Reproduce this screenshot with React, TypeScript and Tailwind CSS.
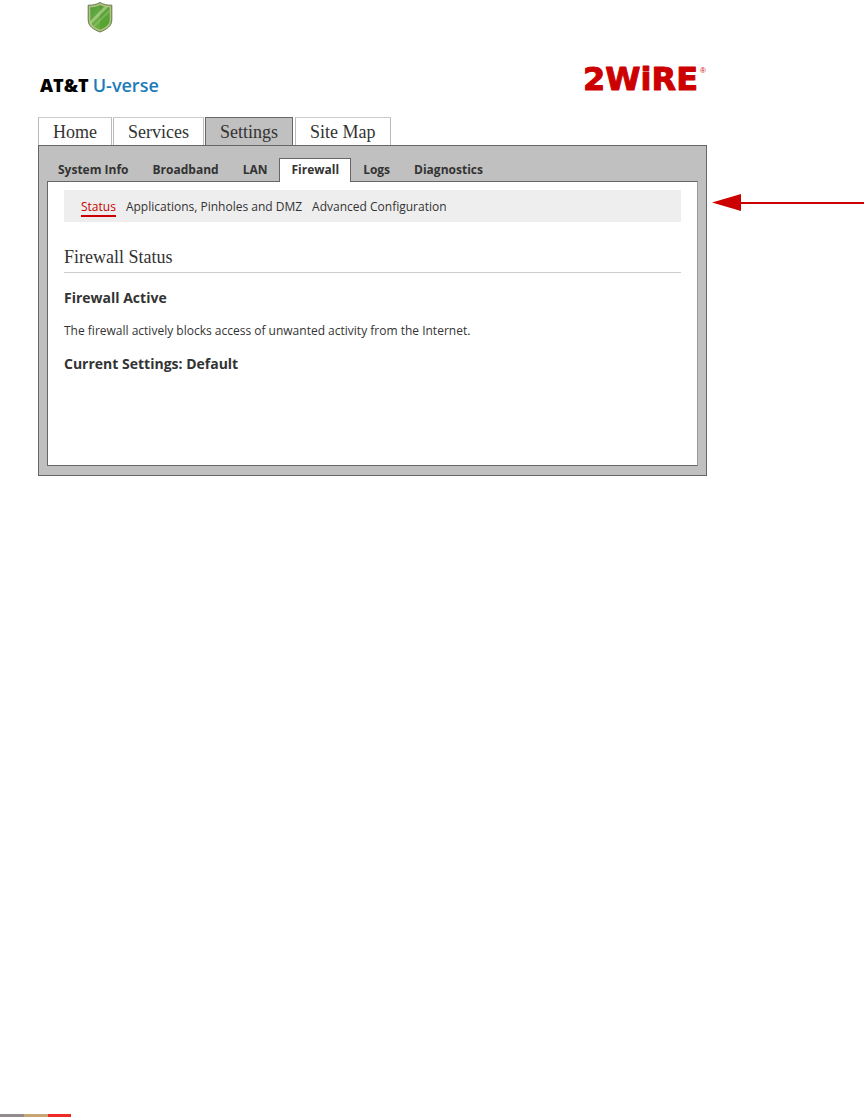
const MAIN_TABS = ["Home", "Services", "Settings", "Site Map"];
const SUB_TABS = ["System Info", "Broadband", "LAN", "Firewall", "Logs", "Diagnostics"];
const PAGES = ["Status", "Applications, Pinholes and DMZ", "Advanced Configuration"];

function ShieldIcon() {
  return (
    <svg width="26" height="32" viewBox="0 0 26 32" aria-hidden="true">
      <defs>
        <linearGradient id="shield" x1="0" y1="0" x2="1" y2="1">
          <stop offset="0" stopColor="#4f9e3c" />
          <stop offset="0.5" stopColor="#6cae45" />
          <stop offset="1" stopColor="#5cb02c" />
        </linearGradient>
      </defs>
      <path
        d="M13 1.5C9.5 3.6 5.5 4.4 1.2 4.2V19c0 6 5.3 9.5 11.8 12C19.5 28.5 24.8 25 24.8 19V4.2C20.5 4.4 16.5 3.6 13 1.5Z"
        fill="#b3c284"
        stroke="#5d7a45"
      />
      <path
        d="M13 4C10 5.6 6.8 6.3 3.3 6.3V19c0 4.7 4.2 7.5 9.7 9.7C18.5 26.5 22.7 23.7 22.7 19V6.3C19.2 6.3 16 5.6 13 4Z"
        fill="url(#shield)"
      />
      <path d="M13 4C16 5.6 19.2 6.3 22.7 6.3V19c0 4.7-4.2 7.5-9.7 9.7Z" fill="#2f8325" opacity="0.25" />
      <path d="M17 5.8 3.3 20V24L21 6.3Z" fill="#d5e8ae" opacity="0.5" />
      <path d="M22.7 8 6 25 7.5 26 22.7 11Z" fill="#d5e8ae" opacity="0.25" />
    </svg>
  );
}

function Header() {
  return (
    <header className="flex items-end justify-between h-[60px]">
      <div className="flex items-baseline gap-1 px-0.5 font-['Open_Sans',sans-serif] text-[18px] leading-6">
        <span className="font-extrabold text-black">AT&amp;T</span>
        <span className="font-semibold text-[#1c7cb8]">U-verse</span>
      </div>
      <svg width="124" height="38" viewBox="0 0 124 38" className="text-[#cc0000]">
        <text
          x="0"
          y="31"
          fill="currentColor"
          stroke="currentColor"
          strokeLinejoin="round"
          className="font-['DejaVu_Sans',sans-serif] font-bold text-[32px]"
        >
          2WiRE
        </text>
        <text x="117" y="14" fill="currentColor" className="font-['Liberation_Sans',sans-serif] text-[8px]">
          ®
        </text>
      </svg>
    </header>
  );
}

function MainNav() {
  return (
    <nav className="flex gap-px font-['Liberation_Serif',serif] text-[18px] leading-[27px]">
      {MAIN_TABS.map((tab) => (
        <a
          key={tab}
          href="#"
          className={
            tab === "Settings"
              ? "-mb-px px-3.5 pt-px leading-[27px] border border-b-0 border-[#666] bg-[#c0c0c0] mr-px"
              : "px-3.5 pt-px leading-[26px] border border-b-0 border-[#bbb] border-t-[#ccc] bg-white"
          }
        >
          {tab}
        </a>
      ))}
    </nav>
  );
}

function SubNav() {
  return (
    <nav className="flex -ml-px text-[12px] leading-[22px] font-bold">
      {SUB_TABS.map((tab) => (
        <a
          key={tab}
          href="#"
          className={
            tab === "Firewall"
              ? "-mb-px px-[11px] border border-b-0 border-[#666] bg-white"
              : "px-3 pt-px"
          }
        >
          {tab}
        </a>
      ))}
    </nav>
  );
}

function Arrow() {
  return (
    <div className="flex items-center pl-[5px] pt-[49px] text-[#cc0000]">
      <svg width="29" height="17" viewBox="0 0 29 17" aria-hidden="true">
        <path d="M0 8.5 29 0V17Z" fill="currentColor" />
      </svg>
      <div className="flex-1 h-0.5 bg-[#cc0000]" />
    </div>
  );
}

export default function App() {
  return (
    <div className="min-h-screen flex flex-col bg-white text-[#333] font-['Open_Sans',sans-serif]">
      <div className="pl-[87px] pt-px">
        <ShieldIcon />
      </div>

      <div className="grid grid-cols-[minmax(0,1fr)_157px] items-start pl-[38px]">
        <div className="pt-1">
          <Header />
          <div className="pt-5">
            <MainNav />
          </div>
        </div>
        <div />

        <main className="border border-[#666] bg-[#c0c0c0] px-2 pt-3 pb-[9px]">
          <SubNav />
          <div className="min-h-[285px] border border-[#666] border-r-[#999] bg-white px-4 pt-2">
            <nav className="flex gap-2.5 bg-[#eee] h-8 px-[17px] pt-2 text-[12px] leading-[18px]">
              {PAGES.map((page) => (
                <a
                  key={page}
                  href="#"
                  className={page === "Status" ? "h-[19px] border-b-2 border-[#cc0000] text-[#cc0000]" : ""}
                >
                  {page}
                </a>
              ))}
            </nav>
            <h1 className="mt-6 pb-1 border-b border-[#ccc] font-['Liberation_Serif',serif] text-[18px] leading-[22px]">
              Firewall Status
            </h1>
            <h2 className="mt-4 text-[14px] leading-[18px] font-bold">Firewall Active</h2>
            <p className="mt-4 text-[12px] leading-4">
              The firewall actively blocks access of unwanted activity from the Internet.
            </p>
            <h2 className="mt-4 text-[14px] leading-[18px] font-bold">Current Settings: Default</h2>
          </div>
        </main>
        <Arrow />
      </div>

      <div className="mt-auto flex h-[3px]">
        <div className="w-6 bg-[#918b8b]" />
        <div className="w-6 bg-[#c8a673]" />
        <div className="w-[23px] bg-[#ee2a24]" />
      </div>
    </div>
  );
}
